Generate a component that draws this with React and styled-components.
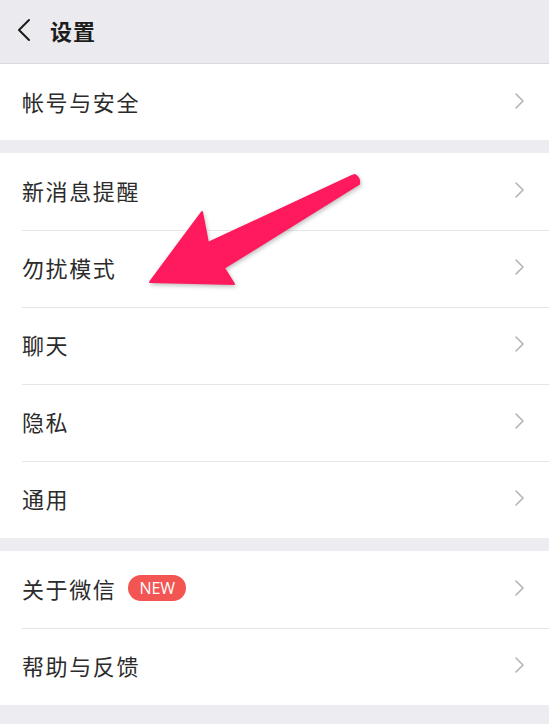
import React from 'react';
import styled, { createGlobalStyle } from 'styled-components';

const GlobalStyle = createGlobalStyle`
  html, body {
    margin: 0;
    padding: 0;
    background: #edecf0;
    font-family: "Noto Sans CJK SC", "Noto Sans", sans-serif;
  }
`;

const Page = styled.div`
  position: relative;
  width: 549px;
  min-height: 724px;
  background: #edecf0;
  overflow: hidden;
`;

const NavBar = styled.header`
  height: 64px;
  box-sizing: border-box;
  display: flex;
  align-items: center;
  padding: 0 0 4px 16px;
  border-bottom: 1px solid #d9d8dc;
  background: #ebeaee;
`;

const Title = styled.h1`
  margin: 0 0 0 18px;
  font-size: 22px;
  font-weight: 700;
  color: #1c1c1c;
  letter-spacing: 1px;
`;

const Group = styled.section`
  background: #fff;
  margin-top: ${(p) => p.$gap}px;
`;

const Row = styled.div`
  height: ${(p) => p.$h || 77}px;
  box-sizing: border-box;
  display: flex;
  align-items: center;
  padding: 0 24px 3px 22px;
  position: relative;

  & + &::before {
    content: '';
    position: absolute;
    top: 0;
    left: 22px;
    right: 0;
    height: 1px;
    background: #e6e6e6;
  }
`;

const Label = styled.span`
  flex: 1;
  display: flex;
  align-items: center;
  font-size: 22px;
  letter-spacing: 1.6px;
  color: #2b2b2b;
`;

const Badge = styled.span`
  margin-left: 12px;
  height: 26px;
  padding: 0 11px;
  border-radius: 13px;
  background: #f35552;
  color: #fff;
  font-family: "Open Sans", "Liberation Sans", sans-serif;
  font-size: 16px;
  font-weight: 400;
  letter-spacing: 0;
  line-height: 26px;
`;

const Arrow = styled.svg`
  position: absolute;
  left: 0;
  top: 0;
  pointer-events: none;
  filter: drop-shadow(1px 2px 2px rgba(0, 0, 0, 0.25));
`;

const Chevron = () => (
  <svg width="11" height="18" viewBox="0 0 11 18">
    <path d="M2 2 L9 9 L2 16" fill="none" stroke="#b4b4b4" strokeWidth="1.6" strokeLinecap="round" strokeLinejoin="round" />
  </svg>
);

const Back = () => (
  <svg width="16" height="24" viewBox="0 0 16 24">
    <path d="M13 2 L3 12 L13 22" fill="none" stroke="#1c1c1c" strokeWidth="2" strokeLinecap="round" strokeLinejoin="round" />
  </svg>
);

const groups = [
  { gap: 0, rows: [{ label: '帐号与安全', h: 76 }] },
  {
    gap: 13,
    rows: [
      { label: '新消息提醒' },
      { label: '勿扰模式' },
      { label: '聊天' },
      { label: '隐私' },
      { label: '通用' },
    ],
  },
  { gap: 13, rows: [{ label: '关于微信', badge: 'NEW' }, { label: '帮助与反馈' }] },
];

export default function App() {
  return (
    <Page>
      <GlobalStyle />
      <NavBar>
        <Back />
        <Title>设置</Title>
      </NavBar>
      {groups.map((g, i) => (
        <Group key={i} $gap={g.gap}>
          {g.rows.map((r) => (
            <Row key={r.label} $h={r.h}>
              <Label>
                {r.label}
                {r.badge && <Badge>{r.badge}</Badge>}
              </Label>
              <Chevron />
            </Row>
          ))}
        </Group>
      ))}
      <Arrow width="549" height="724" viewBox="0 0 549 724">
        <path
          d="M355 175 Q360 178 359 184 L224 268 L234 284 L150 282 L202 212 L208 243 L352 176 Z"
          fill="#fe1a5d"
          strokeLinejoin="round"
          stroke="#fe1a5d"
          strokeWidth="2"
        />
      </Arrow>
    </Page>
  );
}
